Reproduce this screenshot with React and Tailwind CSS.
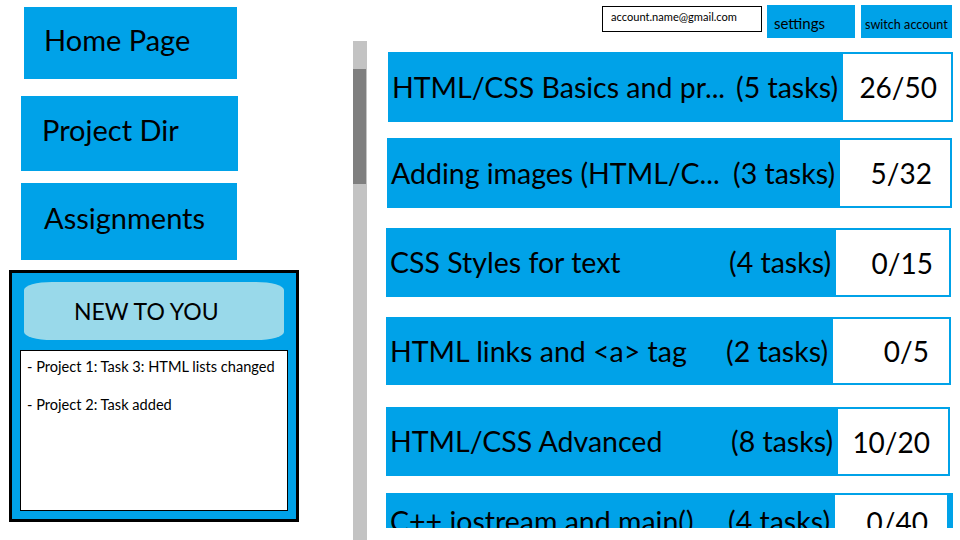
import React from "react";

const courses = [
  { title: "HTML/CSS Basics and pr...", tasks: "(5 tasks)", score: "26/50", ml: 21, w: 565, mt: 14, h: 70, box: 108, inset: 2, pr: 14 },
  { title: "Adding images (HTML/C...", tasks: "(3 tasks)", score: "5/32", ml: 20, w: 565, mt: 16, h: 70, box: 110, inset: 2, pr: 18 },
  { title: "CSS Styles for text", tasks: "(4 tasks)", score: "0/15", ml: 19, w: 565, mt: 20, h: 69, box: 113, inset: 2, pr: 16 },
  { title: "HTML links and <a> tag", tasks: "(2 tasks)", score: "0/5", ml: 19, w: 565, mt: 20, h: 68, box: 116, inset: 2, pr: 20 },
  { title: "HTML/CSS Advanced", tasks: "(8 tasks)", score: "10/20", ml: 19, w: 564, mt: 22, h: 69, box: 110, inset: 2, pr: 18 },
  { title: "C++ iostream and main()", tasks: "(4 tasks)", score: "0/40", ml: 19, w: 567, mt: 17, h: 57, box: 112, inset: 6, pr: 19 },
];

const NavButton = ({ label, className }) => (
  <div className={`flex items-center bg-[#00a2e8] pb-[7px] text-[29px] text-black ${className}`}>
    {label}
  </div>
);

const CourseRow = ({ c }) => (
  <div
    className="flex shrink-0 bg-[#00a2e8]"
    style={{ marginLeft: c.ml, width: c.w, marginTop: c.mt, height: c.h }}
  >
    <div className="flex flex-1 items-center justify-between pl-[4px] pr-[5px] text-[28.5px] text-black whitespace-nowrap">
      <span>{c.title}</span>
      <span>{c.tasks}</span>
    </div>
    <div
      className="flex items-center justify-end bg-white text-[28px] text-black"
      style={{ width: c.box, marginTop: 2, marginBottom: 2, marginRight: c.inset, paddingRight: c.pr }}
    >
      {c.score}
    </div>
  </div>
);

export default function App() {
  return (
    <div className="flex w-[960px] h-[540px] overflow-hidden bg-white font-['Lato','Noto_Sans',sans-serif]">
      {/* sidebar */}
      <div className="flex flex-col w-[300px] shrink-0">
        <NavButton label="Home Page" className="ml-[24px] mt-[7px] w-[213px] h-[72px] pl-[20px]" />
        <NavButton label="Project Dir" className="ml-[21px] mt-[17px] w-[217px] h-[75px] pl-[21px]" />
        <NavButton label="Assignments" className="ml-[21px] mt-[12px] w-[216px] h-[77px] pl-[23px]" />

        <div className="ml-[9px] mt-[10px] w-[290px] h-[252px] border-[3px] border-black bg-[#00a2e8] flex flex-col">
          <div className="ml-[12px] mt-[9px] w-[260px] h-[58px] rounded-[28px_/_8px] bg-[#99d9ea] flex items-center pl-[50px] text-[23px] text-black">
            NEW TO YOU
          </div>
          <div className="ml-[8px] mt-[10px] w-[268px] h-[161px] border border-black bg-white px-[6px] pt-[5px] text-[14.6px] text-black">
            <p>- Project 1: Task 3: HTML lists changed</p>
            <p className="mt-[16px]">- Project 2: Task added</p>
          </div>
        </div>
      </div>

      {/* scrollbar */}
      <div className="ml-[53px] mt-[41px] w-[14px] h-[499px] shrink-0 bg-[#c3c3c3]">
        <div className="mt-[28px] w-[13px] h-[115px] bg-[#7f7f7f]" />
      </div>

      {/* main */}
      <div className="flex flex-col flex-1">
        <div className="flex items-start justify-end pr-[8px] pt-[5px] h-[38px]">
          <div className="mt-[1px] w-[160px] h-[26px] border border-black pl-[8px] pt-[2px] text-[11.1px] text-black">
            account.name@gmail.com
          </div>
          <div className="ml-[5px] w-[88px] h-[33px] bg-[#00a2e8] flex items-center pl-[7px] pt-[3px] text-[15px] text-black">
            settings
          </div>
          <div className="ml-[6px] w-[91px] h-[33px] bg-[#00a2e8] flex items-center pl-[4px] pt-[7px] text-[12.6px] text-black whitespace-nowrap">
            switch account
          </div>
        </div>
        <div className="flex flex-col h-[490px] overflow-hidden">
          {courses.map((c) => (
            <CourseRow key={c.title} c={c} />
          ))}
        </div>
      </div>
    </div>
  );
}
